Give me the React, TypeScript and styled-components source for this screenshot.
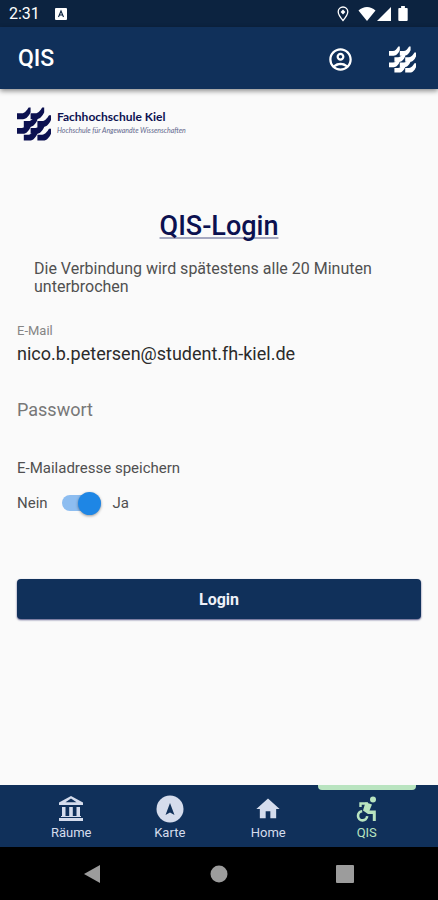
import React, { useState } from "react";
import styled, { createGlobalStyle } from "styled-components";
import { MdHome, MdOutlineAccountCircle } from "react-icons/md";

const colors = {
  navy: "#10305a",
  navyDark: "#0c2340",
  ink: "#0c1150",
  page: "#fafafa",
  text: "#505050",
  mint: "#b9e4c0",
  pale: "#d5dcec",
};

const GlobalStyle = createGlobalStyle`
  *, *::before, *::after { box-sizing: border-box; }
  body {
    margin: 0;
    background: ${colors.page};
    font-family: Roboto, "Liberation Sans", sans-serif;
  }
  button, input { font: inherit; }
`;

const Screen = styled.div`
  display: flex;
  flex-direction: column;
  min-height: 100vh;
  background: ${colors.page};
`;

const StatusBar = styled.div`
  display: flex;
  align-items: center;
  justify-content: space-between;
  height: 27px;
  padding: 0 30px 0 9px;
  background: ${colors.navyDark};
  color: #fff;
`;

const StatusGroup = styled.div<{ $gap: number }>`
  display: flex;
  align-items: center;
  gap: ${(p) => p.$gap}px;
`;

const Clock = styled.span`
  font-size: 16px;
  line-height: 28px;
`;

const AppBar = styled.header`
  display: flex;
  align-items: center;
  justify-content: space-between;
  height: 62px;
  padding: 2px 20px 0 18px;
  background: ${colors.navy};
  color: #fff;
  box-shadow: 0 2px 5px rgba(0, 0, 0, 0.45);
`;

const AppTitle = styled.h1`
  margin: 0;
  font-size: 23px;
  font-weight: 500;
  line-height: 28px;
`;

const AppActions = styled.div`
  display: flex;
  gap: 31px;
`;

const IconButton = styled.button`
  display: grid;
  place-items: center;
  width: 31px;
  height: 32px;
  padding: 0;
  border: 0;
  background: none;
  color: inherit;
`;

const Content = styled.main`
  flex: 1;
  display: flex;
  flex-direction: column;
  padding: 18px 17px;
`;

const Brand = styled.div`
  display: flex;
  align-items: center;
  gap: 6px;
  color: ${colors.ink};
`;

const BrandText = styled.div`
  font-family: Lato, sans-serif;
`;

const BrandName = styled.div`
  font-size: 12px;
  font-weight: 700;
  line-height: 14px;
`;

const BrandClaim = styled.div`
  padding-bottom: 2px;
  font-size: 7px;
  font-style: italic;
  line-height: 12px;
  color: #62678c;
`;

const Title = styled.h2`
  margin: 68px 0 0;
  text-align: center;
  font-size: 27px;
  font-weight: 500;
  line-height: 34px;
  color: ${colors.ink};
  text-decoration: underline;
  text-decoration-color: #a5a8c0;
  text-decoration-thickness: 2px;
  text-underline-offset: 2px;
  text-decoration-skip-ink: none;
`;

const Hint = styled.p`
  margin: 17px 17px 0;
  font-size: 16px;
  line-height: 18px;
  color: ${colors.text};
`;

const Form = styled.form`
  display: flex;
  flex-direction: column;
  margin-top: 27px;
`;

const FieldLabel = styled.label`
  font-size: 13px;
  line-height: 16px;
  color: #858585;
`;

const TextInput = styled.input`
  width: 100%;
  height: 28px;
  padding: 0;
  border: 0;
  outline: 0;
  background: transparent;
  font-size: 18px;
  color: #2b2b2b;
  &::placeholder {
    color: #777;
    opacity: 1;
  }
`;

const PasswordField = styled.div`
  margin-top: 28px;
`;

const SaveGroup = styled.fieldset`
  min-width: 0;
  margin: 36px 0 0;
  padding: 0;
  border: 0;
`;

const SaveLegend = styled.legend`
  padding: 0;
  font-size: 15px;
  line-height: 18px;
  color: ${colors.text};
`;

const SwitchRow = styled.div`
  display: flex;
  align-items: center;
  gap: 12px;
  margin-top: 13px;
  font-size: 15px;
  line-height: 26px;
  color: ${colors.text};
`;

const Switch = styled.input`
  appearance: none;
  display: flex;
  align-items: center;
  width: 39px;
  height: 16px;
  margin: 0 0 0 2px;
  border-radius: 8px;
  background: #b5b5b5;
  cursor: pointer;
  &::before {
    content: "";
    width: 23px;
    height: 23px;
    flex: none;
    border-radius: 50%;
    background: #f5f5f5;
    box-shadow: 0 1px 3px rgba(0, 0, 0, 0.4);
  }
  &:checked {
    justify-content: flex-end;
    background: #8dbdf0;
  }
  &:checked::before {
    background: #1e86e5;
  }
`;

const LoginButton = styled.button`
  width: 100%;
  height: 40px;
  margin-top: 63px;
  padding: 0;
  border: 0;
  border-radius: 4px;
  background: ${colors.navy};
  color: #eef0f8;
  font-size: 16px;
  font-weight: 700;
  box-shadow: 0 1px 2px rgba(10, 10, 80, 0.7);
`;

const TabBar = styled.nav`
  display: grid;
  grid-template-columns: repeat(4, 1fr);
  height: 62px;
  padding: 0 22px;
  background: ${colors.navy};
`;

const Tab = styled.a<{ $active?: boolean }>`
  display: flex;
  flex-direction: column;
  align-items: center;
  padding-top: 10px;
  position: relative;
  color: ${(p) => (p.$active ? colors.mint : colors.pale)};
  font-size: 13px;
  line-height: 16px;
  text-decoration: none;
  &::before {
    content: "";
    display: ${(p) => (p.$active ? "block" : "none")};
    position: absolute;
    inset: 0 0 auto;
    height: 5px;
    border-radius: 0 0 4px 4px;
    background: ${colors.mint};
  }
`;

const TabIcon = styled.span`
  display: grid;
  place-items: center;
  height: 28px;
  margin-bottom: 2px;
`;

const SystemBar = styled.div`
  display: flex;
  align-items: center;
  justify-content: space-between;
  height: 53px;
  padding: 0 84px 0 83px;
  background: #000;
`;

const SystemButton = styled.button`
  display: grid;
  place-items: center;
  padding: 0;
  border: 0;
  background: none;
  color: #9c9c9c;
`;

const SAIL = "M0 6H5C8 6 10 3 12 0H14V5C12 9 10 12 6 12H0Z";
const SAILS = [
  [0, 0],
  [14, 0],
  [7, 8],
  [21, 8],
  [0, 15],
  [14, 15],
  [7, 22],
  [21, 22],
];

function SailsLogo({ size }: { size: number }) {
  return (
    <svg width={size} height={size} viewBox="0 0 35 34" fill="currentColor" aria-hidden="true">
      {SAILS.map(([x, y]) => (
        <path key={`${x}-${y}`} d={SAIL} transform={`translate(${x} ${y})`} />
      ))}
    </svg>
  );
}

function KeyboardBadge() {
  return (
    <svg width="12" height="12" viewBox="0 0 12 12" aria-hidden="true">
      <rect width="12" height="12" rx="1" fill="#fff" />
      <path d="M3.5 9 6 3l2.500 6M4.500 7h3" fill="none" stroke={colors.navyDark} strokeWidth="1.100" />
    </svg>
  );
}

function PinIcon() {
  return (
    <svg width="12" height="16" viewBox="0 0 12 16" aria-hidden="true">
      <path
        d="M6 1C3.200 1 1.200 3.100 1.200 5.800 1.200 9 6 14.500 6 14.500S10.800 9 10.800 5.800C10.800 3.100 8.800 1 6 1Z"
        fill="none"
        stroke="#fff"
        strokeWidth="1.300"
      />
      <path d="M6 3.500 8.400 6 6 8.500 3.600 6Z" fill="#fff" />
    </svg>
  );
}

function WifiIcon() {
  return (
    <svg width="18" height="14" viewBox="0 0 18 14" fill="#fff" aria-hidden="true">
      <path d="M9 14 0.500 3.500C3 1.200 6 0 9 0s6 1.200 8.500 3.500Z" />
    </svg>
  );
}

function SignalIcon() {
  return (
    <svg width="14" height="14" viewBox="0 0 14 14" fill="#fff" aria-hidden="true">
      <path d="M14 0v14H0Z" />
    </svg>
  );
}

function BatteryIcon() {
  return (
    <svg width="10" height="15" viewBox="0 0 10 16" fill="#fff" aria-hidden="true">
      <path d="M3 0h4v2h2a1 1 0 0 1 1 1v12a1 1 0 0 1-1 1H1a1 1 0 0 1-1-1V3a1 1 0 0 1 1-1h2Z" />
    </svg>
  );
}

function BankIcon() {
  return (
    <svg width="24" height="26" viewBox="0 0 24 26" fill="currentColor" aria-hidden="true">
      <path
        fillRule="evenodd"
        d="M12 0 24 6.500V9H0V6.500ZM12 2.600 6.500 6.300H17.500Z"
      />
      <path d="M3 11h3.500v9H3ZM10.200 11h3.600v9h-3.600ZM17.500 11H21v9h-3.500ZM0 22h24v3H0Z" />
      <path d="M2 20h20v1H2Z" />
    </svg>
  );
}

function CompassIcon() {
  return (
    <svg width="28" height="28" viewBox="0 0 28 28" aria-hidden="true">
      <circle cx="14" cy="14" r="13.500" fill="currentColor" />
      <path d="M14 8 18.500 20 14 17.500 9.500 20Z" fill={colors.navy} />
    </svg>
  );
}

function WheelchairIcon() {
  return (
    <svg width="22" height="26" viewBox="0 0 22 26" fill="none" stroke="currentColor" aria-hidden="true">
      <circle cx="17" cy="3.500" r="3" fill="currentColor" stroke="none" />
      <path d="M4.500 11V7.500H12" strokeWidth="2.400" />
      <path d="M9.500 6.300 16 8.500 13.500 14.500H19.800V25H16.800V18H12L7 14.500Z" fill="currentColor" stroke="none" />
      <path d="M6.200 15.200A4.600 4.600 0 1 0 11.200 20.200" strokeWidth="2.600" />
    </svg>
  );
}

const TABS = [
  { label: "Räume", icon: <BankIcon /> },
  { label: "Karte", icon: <CompassIcon /> },
  { label: "Home", icon: <MdHome size={28} /> },
  { label: "QIS", icon: <WheelchairIcon />, active: true },
];

export default function App() {
  const [email, setEmail] = useState("nico.b.petersen@student.fh-kiel.de");
  const [password, setPassword] = useState("");
  const [remember, setRemember] = useState(true);

  return (
    <>
      <GlobalStyle />
      <Screen>
        <StatusBar>
          <StatusGroup $gap={15}>
            <Clock>2:31</Clock>
            <KeyboardBadge />
          </StatusGroup>
          <StatusGroup $gap={7}>
            <StatusGroup $gap={9}>
              <PinIcon />
              <StatusGroup $gap={1}>
                <WifiIcon />
                <SignalIcon />
              </StatusGroup>
            </StatusGroup>
            <BatteryIcon />
          </StatusGroup>
        </StatusBar>
        <AppBar>
          <AppTitle>QIS</AppTitle>
          <AppActions>
            <IconButton type="button" aria-label="Konto">
              <MdOutlineAccountCircle size={27} />
            </IconButton>
            <IconButton type="button" aria-label="Fachhochschule Kiel">
              <SailsLogo size={27} />
            </IconButton>
          </AppActions>
        </AppBar>
        <Content>
          <Brand>
            <SailsLogo size={34} />
            <BrandText>
              <BrandName>Fachhochschule Kiel</BrandName>
              <BrandClaim>Hochschule für Angewandte Wissenschaften</BrandClaim>
            </BrandText>
          </Brand>
          <Title>QIS-Login</Title>
          <Hint>Die Verbindung wird spätestens alle 20 Minuten unterbrochen</Hint>
          <Form onSubmit={(e) => e.preventDefault()}>
            <FieldLabel htmlFor="email">E-Mail</FieldLabel>
            <TextInput
              id="email"
              type="email"
              value={email}
              onChange={(e) => setEmail(e.target.value)}
            />
            <PasswordField>
              <TextInput
                type="password"
                aria-label="Passwort"
                placeholder="Passwort"
                value={password}
                onChange={(e) => setPassword(e.target.value)}
              />
            </PasswordField>
            <SaveGroup>
              <SaveLegend id="save-label">E-Mailadresse speichern</SaveLegend>
              <SwitchRow>
                <span>Nein</span>
                <Switch
                  type="checkbox"
                  role="switch"
                  aria-labelledby="save-label"
                  checked={remember}
                  onChange={(e) => setRemember(e.target.checked)}
                />
                <span>Ja</span>
              </SwitchRow>
            </SaveGroup>
            <LoginButton type="submit">Login</LoginButton>
          </Form>
        </Content>
        <TabBar>
          {TABS.map((tab) => (
            <Tab
              key={tab.label}
              href="#"
              $active={tab.active}
              aria-current={tab.active ? "page" : undefined}
            >
              <TabIcon>{tab.icon}</TabIcon>
              {tab.label}
            </Tab>
          ))}
        </TabBar>
        <SystemBar>
          <SystemButton type="button" aria-label="Zurück">
            <svg width="18" height="20" viewBox="0 0 18 20" fill="currentColor">
              <path d="M17 1v18L1 10Z" />
            </svg>
          </SystemButton>
          <SystemButton type="button" aria-label="Startbildschirm">
            <svg width="18" height="18" viewBox="0 0 18 18" fill="currentColor">
              <circle cx="9" cy="9" r="8.500" />
            </svg>
          </SystemButton>
          <SystemButton type="button" aria-label="Übersicht">
            <svg width="18" height="18" viewBox="0 0 18 18" fill="currentColor">
              <rect width="18" height="18" rx="1" />
            </svg>
          </SystemButton>
        </SystemBar>
      </Screen>
    </>
  );
}
